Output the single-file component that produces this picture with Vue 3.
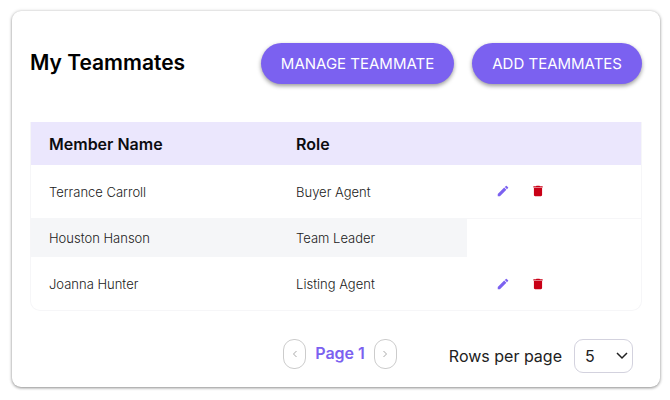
<script setup>
import { ref } from 'vue'

const rowsPerPage = ref('5')
const members = [
  { name: 'Terrance Carroll', role: 'Buyer Agent', editable: true },
  { name: 'Houston Hanson', role: 'Team Leader', editable: false },
  { name: 'Joanna Hunter', role: 'Listing Agent', editable: true },
]
</script>

<template>
  <main class="card">
    <header class="top">
      <h1>My Teammates</h1>
      <div class="buttons">
        <button type="button" class="primary">MANAGE TEAMMATE</button>
        <button type="button" class="primary">ADD TEAMMATES</button>
      </div>
    </header>

    <div class="frame">
      <table>
        <colgroup>
          <col class="col-name" />
          <col class="col-role" />
          <col />
        </colgroup>
        <thead>
          <tr>
            <th scope="col">Member Name</th>
            <th scope="col">Role</th>
            <td></td>
          </tr>
        </thead>
        <tbody>
          <tr v-for="m in members" :key="m.name" :class="{ locked: !m.editable }">
            <td>{{ m.name }}</td>
            <td>{{ m.role }}</td>
            <td class="tools">
              <div v-if="m.editable" class="actions">
                <button type="button" class="icon edit" :aria-label="`Edit ${m.name}`">
                  <svg viewBox="0 0 24 24" width="14" height="14" fill="currentColor">
                    <path d="M3 17.25V21h3.75L17.81 9.94l-3.75-3.75L3 17.25zM20.71 7.04a1 1 0 0 0 0-1.41l-2.34-2.34a1 1 0 0 0-1.41 0l-1.83 1.83 3.75 3.75 1.83-1.83z" />
                  </svg>
                </button>
                <button type="button" class="icon remove" :aria-label="`Delete ${m.name}`">
                  <svg viewBox="0 0 24 24" width="14" height="14" fill="currentColor">
                    <path d="M5 19c0 1.1.9 2 2 2h10c1.1 0 2-.9 2-2V7H5v12zM20 4h-4.500l-1-1h-5l-1 1H4v2h16V4z" />
                  </svg>
                </button>
              </div>
            </td>
          </tr>
        </tbody>
      </table>
    </div>

    <footer class="bottom">
      <nav class="pager" aria-label="Pagination">
        <button type="button" class="step" aria-label="Previous page">
          <svg viewBox="0 0 8 8" width="8" height="8"><path d="M5.500 1 2.500 4l3 3" /></svg>
        </button>
        <span class="page">Page 1</span>
        <button type="button" class="step" aria-label="Next page">
          <svg viewBox="0 0 8 8" width="8" height="8"><path d="m2.500 1 3 3-3 3" /></svg>
        </button>
      </nav>
      <div class="rows">
        <label for="rows">Rows per page</label>
        <div class="select">
          <select id="rows" v-model="rowsPerPage">
            <option>5</option>
            <option>10</option>
            <option>20</option>
          </select>
          <svg viewBox="0 0 12 8" width="12" height="8"><path d="m1 1 5 5 5-5" /></svg>
        </div>
      </div>
    </footer>
  </main>
</template>

<style>
body {
  background: #fff;
}
</style>

<style scoped>
.card {
  margin: 11px 10px 12px 12px;
  padding: 32px 18px 14px;
  border-radius: 9px;
  background: #fff;
  box-shadow: 0 1px 3px rgba(0, 0, 0, 0.4), 0 0 4px rgba(0, 0, 0, 0.12);
  font-family: Inter, "Liberation Sans", sans-serif;
  color: #212121;
}
button,
select {
  font-family: inherit;
}
.top {
  display: flex;
  align-items: center;
  justify-content: space-between;
}
h1 {
  margin: 0;
  font-size: 21px;
  line-height: 28px;
  font-weight: 600;
  padding-bottom: 2px;
  color: #000;
}
.buttons {
  display: flex;
  gap: 18px;
}
.primary {
  height: 41px;
  padding: 0 20px;
  border: 0;
  border-radius: 21px;
  background: #7b61f0;
  color: #fff;
  font-size: 15px;
  white-space: nowrap;
  box-shadow: 0 2px 4px rgba(0, 0, 0, 0.4);
}
.frame {
  margin-top: 38px;
  border: 1px solid #f6f6f8;
  border-top: 0;
  border-radius: 0 0 10px 10px;
}
table {
  width: 100%;
  table-layout: fixed;
  border-collapse: collapse;
}
.col-name {
  width: 40.5%;
}
.col-role {
  width: 31%;
}
th,
td {
  padding: 0 18px;
  text-align: left;
}
thead tr {
  height: 43px;
  background: #ebe7fd;
}
th {
  font-size: 16px;
  font-weight: 600;
  color: #0c0c10;
}
tbody tr {
  height: 53px;
  font-size: 13px;
  font-weight: 300;
}
tbody tr.locked {
  height: 39px;
}
.locked td {
  background: #f5f6f8;
}
.locked .tools {
  border-top: 1px solid #f6f6f8;
  background: #fff;
}
.tools {
  padding-left: 29px;
}
.actions {
  display: flex;
  gap: 21px;
}
.icon {
  display: flex;
  padding: 0;
  border: 0;
  background: none;
}
.edit {
  color: #7b61f0;
}
.remove {
  color: #c90016;
}
.bottom {
  display: flex;
  justify-content: flex-end;
  align-items: center;
  gap: 52px;
  padding: 28px 9px 0 0;
}
.pager {
  display: flex;
  align-items: center;
  gap: 9px;
  padding-bottom: 4px;
}
.step {
  display: flex;
  align-items: center;
  justify-content: center;
  width: 23px;
  height: 30px;
  padding: 0;
  border: 1px solid #ccc;
  border-radius: 11px;
  background: #fff;
}
.step path {
  fill: none;
  stroke: #aaa;
}
.page {
  padding-bottom: 2px;
  font-size: 16px;
  font-weight: 600;
  color: #7b61f0;
}
.rows {
  display: flex;
  align-items: center;
  gap: 12px;
  font-size: 16px;
}
.select {
  display: grid;
  align-items: center;
}
.select > * {
  grid-area: 1 / 1;
}
select {
  appearance: none;
  width: 59px;
  height: 34px;
  padding: 0 10px;
  border: 1px solid #d3d2de;
  border-radius: 9px;
  background: #fff;
  color: #212121;
  font-size: 16px;
}
.select svg {
  justify-self: end;
  margin-right: 5px;
  pointer-events: none;
}
.select path {
  fill: none;
  stroke: #212121;
  stroke-width: 1.5;
}
</style>
